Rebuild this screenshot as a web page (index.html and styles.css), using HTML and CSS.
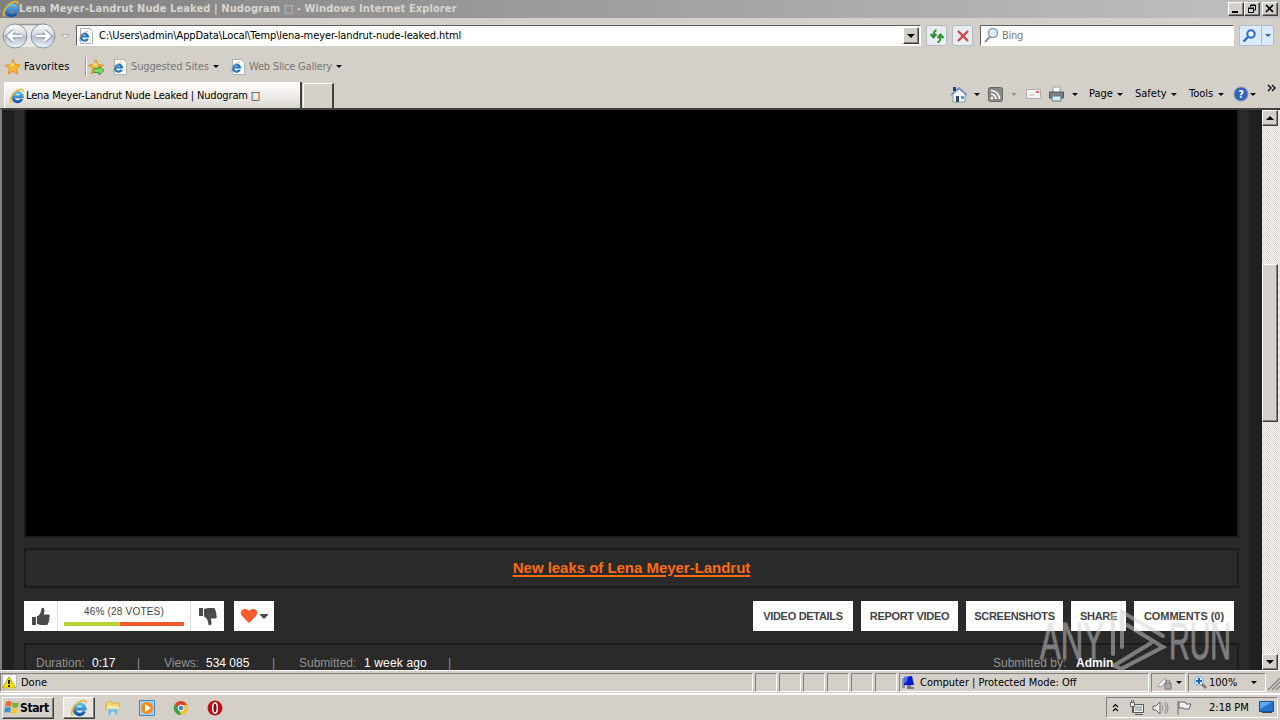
FILE: index.html
```html
<!DOCTYPE html>
<html>
  <head>
    <meta charset="utf-8">
    <title>Windows Internet Explorer</title>
    <link rel="stylesheet" href="styles.css">
  </head>
  <body>
    <svg class="defs">
      <linearGradient id="ieblue" x1="0" y1="0" x2="0" y2="1"><stop offset="0" stop-color="#5cc3f0"/><stop offset="1" stop-color="#1456ac"/></linearGradient>
      <linearGradient id="ball" x1="0" y1="0" x2="0" y2="1"><stop offset="0" stop-color="#fff"/><stop offset=".45" stop-color="#d3d8de"/><stop offset=".5" stop-color="#b0bccb"/><stop offset="1" stop-color="#eef7fd"/></linearGradient>
      <symbol id="ie" viewBox="0 0 16 16">
        <path d="M12.800 11A4.700 4.700 0 1 1 13.200 8.800H5" fill="none" stroke="url(#ieblue)" stroke-width="3"/>
        <path d="M2.500 14.500C-1 13 4 4 10 1.800c3-1.200 4.500 0 4 2" fill="none" stroke="#e9b72d" stroke-width="1.500"/>
      </symbol>
      <symbol id="iepage" viewBox="0 0 16 16">
        <path d="M2.500.500h9l3 3v12h-12z" fill="#fff" stroke="#a5b3c1"/>
        <path d="M9.700 10.800A3.500 3.500 0 1 1 10 8.500H4" fill="none" stroke="#1f76c8" stroke-width="2.200"/>
        <path d="M1.500 13C0 10 5 4 10 3.500" fill="none" stroke="#e0b040"/>
      </symbol>
      <symbol id="star" viewBox="0 0 16 16"><path d="M8 .8l2.200 4.800 5.200.6-3.900 3.500 1.100 5.200L8 12.300l-4.600 2.600 1.100-5.200L.6 6.200l5.200-.6z" fill="#fdb92c" stroke="#d98210" stroke-width=".8"/><path d="M8 3l1.300 3.600L4 7z" fill="#ffe58d"/></symbol>
      <symbol id="thumb" viewBox="0 0 18 19"><path d="M0 10h4v8H0zM5 9.500c3-1.500 4-4 4.500-8C10 0 12.500.5 12.500 3c0 2-.7 3.500-.7 4.500H16c2.500 0 2 2.500 1 3 1 1 .5 2.500-.3 3 .6 1 .2 2.300-.7 2.700.2 1.300-.5 1.800-1.500 1.800H9c-2 0-2-1-4-1z" fill="#4a4a4a"/></symbol>
    </svg>

    <div class="titlebar">
      <svg class="i18"><use href="#ie"/></svg>
      <span class="t-title">Lena Meyer-Landrut Nude Leaked | Nudogram □ - Windows Internet Explorer</span>
      <div class="winbtns">
        <b><svg width="10" height="10"><path d="M1 7h6v2H1z"/></svg></b>
        <b><svg width="10" height="10"><path d="M3.500 3V1h5v5H7M3 1.500h6M1.500 4.500h5v4h-5zM1 4h6" fill="none" stroke="#000"/></svg></b>
        <b class="close"><svg width="10" height="10"><path d="M1 1l7 7M8 1L1 8" stroke="#000" stroke-width="1.700"/></svg></b>
      </div>
    </div>

    <div class="navbar">
      <svg class="navballs" width="76" height="30">
        <path d="M15 4h28v22H15z" fill="#e9e8e5"/>
        <path d="M13 3.500h32" stroke="#999" stroke-width="1.500"/>
        <circle cx="15" cy="15" r="12" fill="url(#ball)" stroke="#8996a3"/>
        <circle cx="43" cy="15" r="12" fill="url(#ball)" stroke="#8996a3"/>
        <path d="M22 15H9M14 10l-5.500 5 5.500 5M36 15h13M44 10l5.500 5-5.500 5" fill="none" stroke="#8797a8" stroke-width="4.500"/>
        <path d="M22 15H9M14 10l-5.500 5 5.500 5M36 15h13M44 10l5.500 5-5.500 5" fill="none" stroke="#fff" stroke-width="2.700"/>
        <path d="M62 13.500h7l-3.500 4z" fill="#eee" stroke="#aaa"/>
      </svg>
      <div class="field address">
        <svg class="i16"><use href="#iepage"/></svg>
        <span class="t-url">C:\Users\admin\AppData\Local\Temp\lena-meyer-landrut-nude-leaked.html</span>
        <b class="drop"><i class="arrow"></i></b>
      </div>
      <div class="navbtn"><svg width="16" height="16"><path d="M7.500 2Q4.500 3 4.500 8M1.500 6l3 3.500 3-3.500M8.500 14.500q3-1 3-6M8.500 10l3-3.500 3 3.500" fill="none" stroke="#349036" stroke-width="2"/></svg></div>
      <div class="navbtn stop"><svg width="16" height="16"><path d="M3 3l10 10M13 3L3 13" stroke="#cf4646" stroke-width="2.400"/></svg></div>
      <div class="field search">
        <svg width="17" height="17"><circle cx="10" cy="6" r="4.500" fill="#d6eff8" stroke="#8aa0aa" stroke-width="1.500"/><path d="M7 9.500L2 15" stroke="#8b9195" stroke-width="2"/></svg>
        <span class="t-bing">Bing</span>
      </div>
      <div class="navbtn go"><svg width="21" height="18"><circle cx="11" cy="7" r="3.700" fill="#eaf5ff" stroke="#2a67c8" stroke-width="2"/><path d="M8 10l-4.500 4.500" stroke="#2a67c8" stroke-width="2.400"/></svg><span><i class="arrow blue"></i></span></div>
    </div>

    <div class="favbar">
      <svg class="i16"><use href="#star"/></svg>
      <span class="t-fav">Favorites</span>
      <div class="vline"></div>
      <svg class="i16 add"><use href="#star"/><path d="M6 9.500h5V7l5 4.500-5 4.500v-2.500H6z" fill="#7ddb63" stroke="#38943a"/></svg>
      <svg class="i16 sug"><use href="#iepage"/></svg>
      <span class="t-sug">Suggested Sites</span><i class="arrow"></i>
      <svg class="i16 web"><use href="#iepage"/></svg>
      <span class="t-web">Web Slice Gallery</span><i class="arrow"></i>
    </div>

    <div class="tabbar">
      <div class="tab"><svg class="i16"><use href="#ie"/></svg><span class="t-tab">Lena Meyer-Landrut Nude Leaked | Nudogram □</span></div>
      <div class="newtab"></div>
      <div class="commands">
        <svg class="home" width="17" height="17"><path d="M3 8v8h12V8L9 3z" fill="#f3f6fa" stroke="#849ab0"/><path d="M1 9l8-7 8 7" fill="none" stroke="#6d8cbf" stroke-width="1.600"/><path d="M3 1h3v4H3z" fill="#243c91"/><path d="M6 10h3v6H6z" fill="#2c4773"/><path d="M11 10h3v3h-3z" fill="#5aa8c8"/></svg><i class="arrow"></i>
        <svg class="rss" width="15" height="15"><rect x=".5" y=".5" width="14" height="14" rx="2" fill="#888" stroke="#666"/><circle cx="4" cy="11" r="1.500" fill="#fff"/><path d="M3 7a5 5 0 0 1 5 5M3 3.500A8.500 8.500 0 0 1 11.500 12" fill="none" stroke="#fff" stroke-width="1.700"/></svg><i class="arrow dim"></i>
        <svg class="mail" width="15" height="12"><path d="M.5 1.500h14v9H.5z" fill="#f4f1f1" stroke="#b1aaa9"/><path d="M10 3h3v2h-3z" fill="#d66"/><path d="M3 7h5" stroke="#bbb"/></svg>
        <svg class="printer" width="17" height="16"><path d="M5 1h7v6H5z" fill="#fff" stroke="#9a9a9a"/><path d="M1.500 6h14v6h-14z" fill="#7b8186" stroke="#555"/><path d="M4 10h9v5H4z" fill="#d3eaf5" stroke="#637988"/></svg><i class="arrow"></i>
        <span class="t-page">Page</span><i class="arrow"></i>
        <span class="t-safety">Safety</span><i class="arrow"></i>
        <span class="t-tools">Tools</span><i class="arrow"></i>
        <svg class="help" width="16" height="16"><circle cx="8" cy="8" r="7" fill="#3160bd" stroke="#8998b5"/><text x="8" y="12" text-anchor="middle">?</text></svg><i class="arrow"></i>
        <svg class="chev" width="9" height="8"><path d="M1 1l3 3-3 3M5 1l3 3-3 3" fill="none" stroke="#000" stroke-width="1.300"/></svg>
      </div>
    </div>

    <div class="viewport">
      <div class="page">
        <div class="content">
          <div class="player"></div>
          <div class="promo"><a href="#">New leaks of Lena Meyer-Landrut</a></div>
          <div class="actions">
            <div class="votes">
              <div class="vote"><svg width="18" height="19"><use href="#thumb"/></svg></div>
              <div class="rating"><span class="t-votes">46% (28 VOTES)</span><div class="bar"></div></div>
              <div class="vote down"><svg width="18" height="19"><use href="#thumb"/></svg></div>
            </div>
            <div class="heart"><svg width="18" height="16"><path d="M9 15L2 8C-1 4 2 1 5 1c2 0 3 1 4 2 1-1 2-2 4-2 3 0 6 3 3 7z" fill="#ff5a2b"/></svg><svg width="8" height="5"><path d="M0 0h8v1L4 5 0 1z" fill="#4a4a4a"/></svg></div>
            <div class="tabs">
              <a class="b1">VIDEO DETAILS</a><a class="b2">REPORT VIDEO</a><a class="b3">SCREENSHOTS</a><a class="b4">SHARE</a><a class="b5">COMMENTS (0)</a>
            </div>
          </div>
          <div class="info">
            <span class="k1">Duration:</span><em class="v1">0:17</em><span class="sep s1">|</span>
            <span class="k2">Views:</span><em class="v2">534 085</em><span class="sep s2">|</span>
            <span class="k3">Submitted:</span><em class="v3">1 week ago</em><span class="sep">|</span>
            <span class="k4">Submitted by:</span><strong>Admin</strong>
          </div>
        </div>
      </div>
      <div class="scrollbar"><b><i class="arrow up"></i></b><div class="thumb"></div><b class="last"><i class="arrow"></i></b></div>
    </div>

    <div class="statusbar">
      <div class="pane done"><svg width="17" height="17"><path d="M1.500.5h14v15h-14z" fill="#fff" stroke="#bbb"/><path d="M8 3l6.500 11H1.500z" fill="#ffe500" stroke="#bca000"/><path d="M8 6v4M8 11v2" stroke="#000" stroke-width="1.700"/></svg><span class="t-done">Done</span></div>
      <div class="pane sm"></div><div class="pane sm"></div><div class="pane sm"></div><div class="pane sm"></div><div class="pane sm"></div><div class="pane sm"></div>
      <div class="pane zone"><svg width="17" height="16"><path d="M2 3h3v10H2z" fill="#8c9094"/><path d="M4 2l8-1 2 9H4z" fill="#0718cf"/><path d="M4 2h4L6 8H4z" fill="#4776f5"/><path d="M7 10h4v2h3v2H7z" fill="#778"/></svg><span class="t-zone">Computer | Protected Mode: Off</span></div>
      <div class="pane lock"><svg width="18" height="16"><path d="M1 11L9 3l2 7-3-1-2 3z" fill="#eee" stroke="#999"/><path d="M9 8h6v6H9z" fill="#aaa" stroke="#777"/><path d="M10 8V6q2-2 4 0v2" fill="none" stroke="#777"/></svg><i class="arrow"></i></div>
      <div class="pane zoom"><svg width="15" height="15"><circle cx="6" cy="6" r="4.500" fill="#dff1ff" stroke="#8fbbe5" stroke-width="1.300"/><path d="M6 3v6M3 6h6" stroke="#1862c2" stroke-width="2"/><path d="M9 9l4 4" stroke="#8c7768" stroke-width="2.500"/></svg><span class="t-zoom">100%</span><i class="arrow"></i></div>
      <svg class="grip" width="12" height="16"><path d="M0 15L12 3M4 15l8-8M8 15l4-4" stroke="#888" stroke-width="1.500"/></svg>
    </div>

    <div class="taskbar">
      <div class="start"><svg width="17" height="17"><path d="M3 3q3-2 6 0L8 8Q5 6 2 8z" fill="#ec6a2c"/><path d="M10 3q3 2 6 0l-1 5q-3 2-6 0z" fill="#78b43c"/><path d="M2 9q3-2 6 0l-1 5q-3-2-6 0z" fill="#3d8fd8"/><path d="M9 9q3 2 6 0l-1 5q-3 2-6 0z" fill="#f6c534"/></svg><span class="t-start">Start</span></div>
      <div class="running"><svg class="i18"><use href="#ie"/></svg></div>
      <div class="quick">
        <svg width="16" height="16"><path d="M1 3l5-2 1 2h7v7H1z" fill="#f4d675" stroke="#d7b34f"/><path d="M2 6h12v7H2z" fill="#ffeaa0"/><path d="M3 15V9h10v6h-3v-3H6v3z" fill="#71bbe2" stroke="#a7d8ef"/></svg>
        <svg width="16" height="16"><path d="M.5.5h15v15H.5z" fill="#a9cdf0" stroke="#4887c4"/><circle cx="8" cy="8" r="6" fill="#f38b16"/><path d="M6 4l6 4-6 4z" fill="#fff"/></svg>
        <svg width="16" height="16"><circle cx="8" cy="8" r="7" fill="#f1c32d"/><path d="M2 4a7 7 0 0 1 12 1H8L5 9z" fill="#d9402e"/><path d="M2 4l4 6 2 5A7 7 0 0 1 2 4z" fill="#3b9b4b"/><circle cx="8" cy="8" r="3" fill="#4d86da" stroke="#fff"/></svg>
        <svg width="16" height="16"><circle cx="8" cy="8" r="7.500" fill="#bd1118"/><ellipse cx="8" cy="8" rx="2.300" ry="5" fill="#800c11" stroke="#fff" stroke-width="1.500"/></svg>
      </div>
      <div class="tray">
        <svg width="7" height="10"><path d="M1 4l2.500-2.500L6 4M1 8l2.500-2.500L6 8" fill="none" stroke="#000" stroke-width="1.200"/></svg>
        <svg class="net" width="16" height="16"><path d="M4.500 4.500h10v8h-10z" fill="#bbb" stroke="#555"/><path d="M5.500 5.500h8v6h-8z" fill="none" stroke="#eee"/><path d="M6 14.500h8M3.500 7v6" fill="none" stroke="#555"/><path d="M1.500 2.500h4v4h-4zM2.500 0v3M4.500 0v3" fill="#eee" stroke="#666"/></svg>
        <svg class="vol" width="17" height="16"><path d="M1 6h3l4-4v12l-4-4H1z" fill="#eee" stroke="#666"/><path d="M10 5q2 3 0 6M12 3q4 5 0 10M14 2q4 6 0 12" fill="none" stroke="#888"/></svg>
        <svg class="flag" width="16" height="16"><path d="M2 1v14M3 2h6l1 2h5l-2 5H8L7 8H3z" fill="#eee" stroke="#666"/></svg>
        <span class="t-clock">2:18 PM</span>
        <svg class="desk" width="15" height="13"><path d="M.5.5h14v10H.5z" fill="#2673cd" stroke="#174f96"/><path d="M1 1h12L1 8z" fill="#60a8ec"/><path d="M3 11.500h10" stroke="#345"/></svg>
      </div>
    </div>

    <svg class="watermark" width="200" height="62">
      <text x="3" y="50" textLength="64" lengthAdjust="spacingAndGlyphs">ANY</text>
      <path d="M76 45V6M85 38V3L126 27M85 12v0M90 16l36 22-42 22-8-4M114 34L78 56" fill="none"/>
      <text x="132" y="50" textLength="62" lengthAdjust="spacingAndGlyphs">RUN</text>
    </svg>
  </body>
</html>
```

FILE: styles.css
```css
* { box-sizing: border-box; }
body { margin: 0; width: 1280px; height: 720px; overflow: hidden; position: relative; background: #d4d0c8; color: #000; font: 11px/14px "DejaVu Sans Condensed", "DejaVu Sans", sans-serif; font-stretch: condensed; }
svg { display: block; flex: none; }
span, em, strong { white-space: nowrap; flex: none; }
.defs { position: absolute; width: 0; height: 0; }
.i16 { width: 16px; height: 16px; }
.i18 { width: 18px; height: 18px; }
.arrow { width: 0; height: 0; flex: none; border: 3px solid transparent; border-top-color: #000; border-bottom: 0; }
.arrow.blue { border-top-color: #2a62b9; }
.arrow.dim { border-top-color: #999; }
.arrow.up { border-top: 0; border-bottom: 4px solid #000; border-left-width: 4px; border-right-width: 4px; }

.titlebar { height: 18px; display: flex; align-items: center; background: linear-gradient(90deg, #808080, #c0c0c0); color: #d8d5cf; font-weight: bold; padding-left: 2px; }
.t-title { width: 440px; margin-left: -1px; letter-spacing: .1px; }
.winbtns { display: flex; margin-left: auto; padding-right: 2px; }
.winbtns b, .drop, .scrollbar b { display: flex; align-items: center; justify-content: center; background: #d4d0c8; border: 1px solid; border-color: #fff #404040 #404040 #fff; box-shadow: inset -1px -1px #808080; }
.winbtns b { width: 16px; height: 14px; }
.winbtns .close { margin-left: 2px; }

.navbar { height: 35px; display: flex; align-items: center; }
.navballs { width: 76px; }
.field { height: 21px; background: #fff; border: 1px solid; border-color: #606060 #fff #fff #606060; display: flex; align-items: center; }
.address { width: 845px; padding: 0 1px; }
.t-url { margin-left: 5px; letter-spacing: -.1px; }
.drop { width: 16px; height: 17px; margin-left: auto; }
.drop .arrow { border-width: 4px 4px 0; }
.navbtn { width: 21px; height: 21px; margin-left: 5px; border: 1px solid #b3bdca; border-radius: 2px; background: #e9edf2; display: flex; align-items: center; justify-content: center; }
.search { width: 254px; margin-left: 7px; padding-left: 2px; }
.t-bing { color: #777; margin-left: 2px; letter-spacing: -.3px; }
.go { width: 35px; background: #dcebfa; }
.go span { height: 19px; width: 13px; border-left: 1px solid #b3bdca; display: flex; align-items: center; justify-content: center; }

.favbar { height: 27px; display: flex; align-items: center; padding-left: 5px; color: #777; }
.t-fav { color: #000; width: 61px; margin-left: 3px; letter-spacing: .1px; }
.vline { width: 2px; height: 20px; background: #999; border-right: 1px solid #fff; }
.add { margin-left: 1px; }
.sug { margin-left: 8px; }
.t-sug { margin-left: 3px; width: 82px; letter-spacing: -.15px; }
.web { margin-left: 11px; }
.t-web { margin-left: 3px; width: 87px; letter-spacing: -.2px; }

.tabbar { height: 28px; display: flex; align-items: flex-end; padding-left: 4px; }
.tab { width: 298px; height: 26px; display: flex; align-items: center; padding: 2px 0 0 4px; background: linear-gradient(#fff, #ece9e5 60%, #d9d5ce); border-left: 1px solid #fff; border-right: 2px solid #404040; }
.t-tab { margin-left: 1px; letter-spacing: -.15px; }
.newtab { width: 31px; height: 25px; margin-left: 1px; border: 1px solid #fff; border-right: 2px solid #404040; border-bottom: 0; }
.commands { display: flex; align-items: center; height: 28px; margin-left: 616px; }
.home + .arrow { margin-left: 7px; }
.rss { margin-left: 8px; }
.rss + .arrow { margin-left: 8px; }
.mail { margin-left: 9px; }
.printer { margin-left: 7px; }
.printer + .arrow { margin-left: 7px; }
.t-page { margin-left: 11px; width: 28px; }
.t-safety { margin-left: 12px; width: 36px; }
.t-tools { margin-left: 12px; width: 29px; }
.help { margin-left: 9px; }
.help + .arrow { margin-left: 1px; }
.help text { fill: #fff; font-weight: bold; font-size: 11px; }
.chev { margin: -13px 0 0 11px; }

.viewport { height: 562px; display: flex; border-top: 2px solid #404040; border-left: 2px solid #808080; }
.page { width: 1260px; height: 560px; overflow: hidden; padding: 0 13px 0 12px; background: repeating-linear-gradient(0deg, #1c1c1c 0 1px, #232323 1px 2px); font-family: "Liberation Sans", Arial, sans-serif; font-stretch: normal; }
.content { height: 560px; background: #2a2a2a; padding: 0 10px; }
.player { height: 428px; background: #000; border: 2px solid #1c1c1c; border-top: 0; }
.promo { height: 40px; margin-top: 10px; border: 2px solid #1c1c1c; display: flex; align-items: center; justify-content: center; padding-bottom: 2px; }
.promo a { color: #ff6b0e; font-size: 15px; line-height: 17px; font-weight: bold; text-decoration-thickness: 2px; text-underline-offset: 2px; white-space: nowrap; letter-spacing: -.03px; }
.actions { display: flex; height: 30px; margin-top: 13px; }
.votes { display: flex; width: 200px; background: #fff; }
.vote { width: 34px; display: flex; align-items: center; justify-content: center; border-right: 1px solid #ddd; }
.vote.down { border: 0; border-left: 1px solid #ddd; }
.down svg { transform: rotate(180deg) scaleX(-1); }
.rating { width: 132px; padding: 4px 6px 0; text-align: center; color: #444; }
.t-votes { display: block; font-size: 10px; letter-spacing: .2px; }
.bar { height: 4px; margin-top: 3px; background: linear-gradient(90deg, #b5d334 47%, #f15a29 47%); }
.heart { width: 40px; margin-left: 10px; background: #fff; display: flex; align-items: center; justify-content: center; gap: 2px; }
.tabs { display: flex; gap: 8px; margin-left: auto; padding-right: 5px; }
.tabs a { height: 30px; display: flex; align-items: center; justify-content: center; background: #fff; color: #444; font-weight: bold; white-space: nowrap; letter-spacing: -.3px; }
.b1 { width: 100px; }
.b2 { width: 97px; }
.b3 { width: 97px; }
.b4 { width: 55px; }
.b5 { width: 100px; }
.tabs .b5 { letter-spacing: -.05px; }
.info { height: 60px; margin-top: 12px; border: 2px solid #1c1c1c; display: flex; padding: 11px 0 0 10px; color: #929292; font-size: 12px; }
.info em, .info strong { color: #fff; font-style: normal; }
.k1 { width: 56px; }
.v1 { width: 45px; }
.s1 { width: 27px; }
.k2 { width: 42px; }
.v2 { width: 66px; }
.s2 { width: 27px; }
.k3 { width: 65px; }
.v3 { width: 84px; letter-spacing: .15px; }
.k4 { width: 83px; margin-left: auto; }
.info strong { width: 161px; }
.scrollbar { width: 18px; height: 560px; background: repeating-conic-gradient(#fff 0 25%, #d4d0c8 0 50%) 0 0 / 2px 2px; display: flex; flex-direction: column; padding-right: 2px; }
.scrollbar b { height: 16px; }
.scrollbar .last { margin-top: auto; }
.scrollbar b .arrow { border-left-width: 4px; border-right-width: 4px; }
.scrollbar .last .arrow { border-top-width: 4px; }
.thumb { height: 158px; margin-top: 138px; background: #d4d0c8; border: 1px solid; border-color: #fff #404040 #404040 #fff; box-shadow: inset -1px -1px #808080; }

.statusbar { height: 24px; display: flex; align-items: center; padding-top: 1px; border-top: 1px solid #fff; border-bottom: 1px solid #fff; }
.pane { height: 19px; border: 1px solid; border-color: #808080 #fff #fff #808080; margin-right: 2px; display: flex; align-items: center; flex: none; }
.done { width: 753px; }
.t-done { margin-left: 3px; }
.sm { width: 22px; }
.zone { width: 250px; }
.t-zone { margin-left: 3px; letter-spacing: -.03px; }
.lock { width: 35px; padding-left: 4px; }
.lock .arrow { margin-left: 2px; }
.zoom { width: 78px; padding-left: 4px; }
.t-zoom { margin-left: 1px; width: 42px; }

.taskbar { height: 26px; display: flex; align-items: center; border-top: 1px solid #fff; padding-left: 2px; }
.start, .running { height: 22px; border: 1px solid; border-color: #fff #404040 #404040 #fff; box-shadow: inset -1px -1px #808080; display: flex; align-items: center; }
.start { width: 52px; font-weight: bold; font-size: 12px; }
.t-start { letter-spacing: -.4px; }
.running { width: 32px; margin-left: 9px; justify-content: center; background: #e8e5e0; }
.quick { display: flex; gap: 18px; margin-left: 10px; }
.tray { width: 172px; height: 21px; margin-left: auto; margin-right: 2px; border: 1px solid; border-color: #808080 #fff #fff #808080; display: flex; align-items: center; padding-left: 5px; }
.net { margin-left: 10px; }
.vol { margin-left: 7px; }
.flag { margin-left: 7px; }
.t-clock { margin-left: 17px; width: 42px; }
.desk { margin-left: 8px; }

.watermark { position: absolute; left: 1037px; top: 609px; opacity: .5; }
.watermark text { fill: #d0d0d0; stroke: #d0d0d0; stroke-width: 1; font: 51px "Liberation Sans Narrow", "Liberation Sans", sans-serif; }
.watermark path { stroke: #d0d0d0; stroke-width: 4; stroke-linecap: round; }
```
